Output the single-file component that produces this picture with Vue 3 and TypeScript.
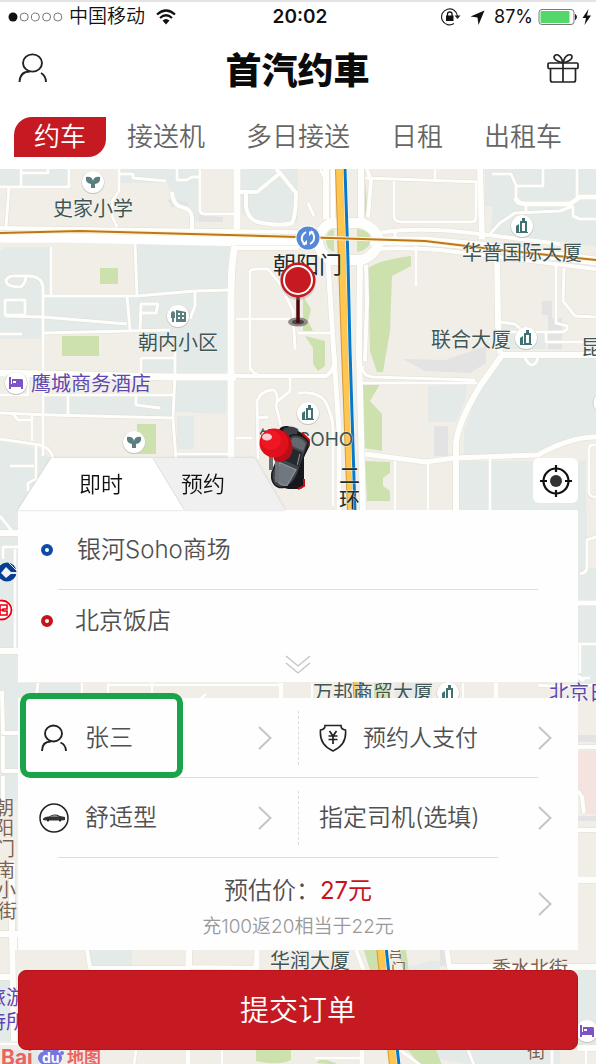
<script setup lang="ts">
import { ref } from 'vue'

interface Road { d: string; w: number }
interface Label { text: string; x: number; y: number; size: number; tone: string }
interface Poi { x: number; y: number; kind: 'school' | 'tower' | 'hotel' | 'estate' }

const services: string[] = ['约车', '接送机', '多日接送', '日租', '出租车']
const activeService = ref<string>('约车')
const timing = ref<'now' | 'later'>('now')

const tealAreas: string[] = [
  'M0 168H68V186H0Z', 'M118 168H200V220H192Q191 208 178 205L172 192L166 182H118Z', 'M240 168H298V222L262 224L240 212Z',
  'M0 250L5 246H50V295H43V338H0Z', 'M137 243L230 245V290L137 294Z', 'M43 297L230 290V346H140V330H43Z',
  'M45 395H172V417L45 413Z', 'M142 357H173V373H142Z', 'M175 346H229L226 413L176 411Z', 'M177 415H194V448H177Z',
  'M0 440L38 447L52 458V510H18V538H0Z', 'M178 454H230V460H178Z',
  'M485 168H596V246L545 238L490 232L493 206L485 205Z', 'M428 385L467 382L465 400L456 421H428Z',
  'M500 355H596V435L566 438L540 455H464V430L478 390Z', 'M458 460H586V510H458Z', 'M502 323L520 326L546 332V348H502Z',
  'M578 510H587V567H596V682H578Z', 'M0 535H18V800H0Z', 'M0 682H82V698H0Z', 'M395 682H432V698H395Z',
  'M86 949H132V968L90 966Z', 'M410 965L430 960H440V970H410Z', 'M530 1049H560V1064H530Z', 'M400 1049H530V1064H470Z',
  'M578 970H596V1045H578Z', 'M0 976H12V1040H0Z', 'M12 1049H38V1064H12Z'
]
const greenAreas: string[] = [
  'M100 267H118V283H100Z', 'M62 335H99V355H62Z', 'M137 423H156V453H137Z',
  'M334 228Q326 230 326 240Q327 249 334 251Z', 'M357 228Q371 229 371 240Q369 249 357 251Z',
  'M365 180L368 214H365Z', 'M368 268Q374 260 411 255V265L392 275L390 330L383 371H377L370 350Z',
  'M363 383H380L370 400L382 413V450L364 447Z', 'M365 460L390 461V472L383 477V485L390 490V500H367Z',
  'M303 295L311 308L308 320L313 330L303 332Z', 'M305 335L325 340L325 365L318 370L313 363V347Z',
  'M374 682H388V698H374Z', 'M364 949H378L382 970H370Z', 'M398 949H406L409 970H403Z',
  'M256 1049H291V1059Q280 1065 256 1060Z', 'M316 1062L322 1057L340 1064Z', 'M408 1049H436L442 1064H420Z'
]
const greyAreas: string[] = [
  'M167 198L188 201V206H172Z', 'M199 214L223 216V221H199Z', 'M403 358L445 359L486 345V362L470 372L425 370Z',
  'M434 425H448V455H434Z', 'M542 300H552V317H562V348H548V314H542Z', 'M578 734H596V741H578Z', 'M578 815H596V820H578Z',
  'M440 949H450V965H440Z'
]
const roads: Road[] = [
  { d: 'M0 186H69V168M21 168V186M21 172H48V168M9 186L6 226', w: 2 },
  { d: 'M119 168V173H133V177L166 180M119 173V190L112 200V215L117 226', w: 2 },
  { d: 'M172 191Q173 205 182 206Q191 208 192 216V229', w: 3 },
  { d: 'M177 168V179H187L192 176H200M200 168V210Q201 213 205 213H234', w: 2 },
  { d: 'M240 191H257L280 172L276 168M280 172L296 192M246 191V205Q247 218 258 221Q280 226 292 222Q296 215 296 190', w: 3 },
  { d: 'M51 246V295M135 243L137 294M43 295H137L195 290L230 289M6 281Q6 275 14 275H30Q42 276 43 286V455M6 281Q8 286 20 286Q25 284 26 276', w: 2 },
  { d: 'M5 299H25V314H5ZM5 315L43 316L127 323M0 333H22M43 332L170 329M127 295L130 329M140 330L141 303H158L156 312H142M195 290V305L190 318', w: 2 },
  { d: 'M250 370V270Q252 268 258 268H268L280 283L293 310L295 348M236 318H290M250 365Q252 373 258 373', w: 2 },
  { d: 'M0 227L298 231M236 247H298', w: 3 },
  { d: 'M0 372L170 376H236', w: 6 }, { d: 'M236 375H326Q335 370 335 355', w: 3 },
  { d: 'M141 374V357H175M175 346V372L173 418L176 458M43 394H173M0 412L50 414L172 417M68 394V414M136 394V404L160 407', w: 2 },
  { d: 'M0 438L40 444Q52 448 53 458M32 413V440M13 413L18 419H32M10 465H34M36 445V478L28 482V490M176 453H232M28 376V394H0', w: 2 },
  { d: 'M258 458L257 400Q262 388 274 389Q279 394 276 405L281 425M236 437H252M257 417L268 416M290 376V390L278 400M298 392Q318 390 325 400Q333 415 333 430V505', w: 2 },
  { d: 'M237 168V228M235 245Q231 260 231 300V510', w: 6 },
  { d: 'M365 177L480 181M435 168V180M394 180V216Q395 221 402 221H473Q476 220 476 215V182', w: 2 },
  { d: 'M480 168L482 238M497 252L498 322L500 352', w: 5 },
  { d: 'M492 173H511L516 184V200M515 185H543V168M577 168V196M573 205V215L580 218H596M488 235L500 222L515 212L560 210L573 205M526 203V212', w: 2 },
  { d: 'M516 197Q516 202 525 203H570L580 196H596', w: 4 },
  { d: 'M378 232Q420 225 480 233L560 243M378 248Q400 246 440 249L596 268', w: 3 },
  { d: 'M370 240L425 240L480 245L596 260', w: 8 },
  { d: 'M416 245V285M556 265V322L567 325Q568 330 562 331H505M564 267L563 300L575 315L596 316M500 321L515 323L525 332M546 331V341H596', w: 2 },
  { d: 'M596 354H502L480 385Q456 425 456 445V510', w: 5 },
  { d: 'M365 453L425 461L455 457L538 454Q570 436 596 436', w: 4 },
  { d: 'M362 365Q363 375 372 376L475 379M362 382H477M395 460V510M428 460V510M490 458V510M525 356Q527 363 532 364Q537 363 538 356M596 444H592Q589 445 589 448V492Q590 496 596 496', w: 2 },
  { d: 'M298 332H330M320 168L324 176M308 202L314 215M395 231V240', w: 2 },
  { d: 'M326 168V218', w: 5 }, { d: 'M333 168V222M328 262L333 340L339 430V510', w: 4 },
  { d: 'M361 168V218M360 264L359 350L363 510', w: 5 },
  { d: 'M367 168L371 180L368 216M366 264L367 300L365 360', w: 3 },
  { d: 'M330 222H362Q377 228 379 240Q377 253 362 259H330Q319 252 318 240Q320 228 330 222Z', w: 9 },
  { d: 'M0 532H18M0 650H18', w: 5 }, { d: 'M3 558V546H18M15 548V648M0 515L12 530', w: 2 },
  { d: 'M578 602H596', w: 4 }, { d: 'M596 536L587 539V565Q587 572 580 573M578 643H596M580 643V672M578 677H590', w: 2 },
  { d: 'M38 682L36 698M82 682V698M108 684H280M108 682V698M152 682V698M200 698L206 693M312 682V698M463 682V698M538 684Q550 686 596 684', w: 2 },
  { d: 'M281 682V698M496 682V698', w: 4 }, { d: 'M2 690L3 732H18M3 735V770H18M3 775V800', w: 3 },
  { d: 'M578 746H596M578 829H596M578 790L582 796L584 812M578 880H596M578 675L584 680', w: 3 },
  { d: 'M0 933H12M12 933L14 1040M12 860V930M0 976H12M14 949V933H18', w: 5 },
  { d: 'M87 949L90 967H190M190 949V966L255 967L257 949M356 949L364 970', w: 3 },
  { d: 'M188 949V970M188 1049V1064M257 949V970M447 949L450 970M362 1049V1064', w: 4 },
  { d: 'M450 966H596M578 1047H596', w: 5 },
  { d: 'M0 1043H18M134 1064L136 1049M222 1049V1064M468 1049L474 1064M552 1049V1064M586 1049V1064M315 1057H360M420 1064L400 1049', w: 2 },
  { d: 'M578 878H596', w: 4 }
]
const labels: Label[] = [
  { text: '史家小学', x: 53, y: 215, size: 20, tone: 'slate' },
  { text: '朝阳门', x: 273, y: 272, size: 23, tone: 'dark' },
  { text: '华普国际大厦', x: 462, y: 259, size: 20, tone: 'slate' },
  { text: '联合大厦', x: 431, y: 346, size: 20, tone: 'slate' },
  { text: '昆', x: 581, y: 354, size: 20, tone: 'slate' },
  { text: '朝内小区', x: 138, y: 349, size: 20, tone: 'slate' },
  { text: '鹰城商务酒店', x: 31, y: 390, size: 20, tone: 'purple' },
  { text: '银河', x: 259, y: 445, size: 20, tone: 'slate' },
  { text: '二', x: 339, y: 482, size: 21, tone: 'dark' },
  { text: '环', x: 339, y: 506, size: 21, tone: 'dark' },
  { text: '万邦商贸大厦', x: 313, y: 699, size: 20, tone: 'slate' },
  { text: '北京日报', x: 549, y: 699, size: 20, tone: 'purple' },
  { text: '朝', x: -5, y: 814, size: 19, tone: 'brown' },
  { text: '阳', x: -5, y: 834, size: 19, tone: 'brown' },
  { text: '门', x: -4, y: 855, size: 19, tone: 'brown' },
  { text: '南', x: -4, y: 876, size: 19, tone: 'brown' },
  { text: '小', x: -3, y: 896, size: 19, tone: 'brown' },
  { text: '街', x: -2, y: 917, size: 19, tone: 'brown' },
  { text: '华润大厦', x: 270, y: 967, size: 20, tone: 'slate' },
  { text: '秀水北街', x: 492, y: 974, size: 19, tone: 'brown' },
  { text: '旅游', x: -14, y: 1004, size: 20, tone: 'purple' },
  { text: '待所', x: -14, y: 1028, size: 20, tone: 'purple' },
  { text: '街', x: 527, y: 1057, size: 19, tone: 'brown' },
  { text: '宫', x: 388, y: 956, size: 15, tone: 'brown' },
  { text: '门', x: 391, y: 973, size: 15, tone: 'brown' }
]
const pois: Poi[] = [
  { x: 93, y: 181, kind: 'school' }, { x: 134, y: 441, kind: 'school' },
  { x: 522, y: 225, kind: 'tower' }, { x: 526, y: 337, kind: 'tower' },
  { x: 308, y: 412, kind: 'tower' }, { x: 448, y: 692, kind: 'tower' },
  { x: 16, y: 382, kind: 'hotel' }, { x: 587, y: 1030, kind: 'hotel' },
  { x: 178, y: 315, kind: 'estate' }
]
</script>

<template>
  <div class="page">
    <header class="top">
      <div class="status">
        <div class="status-left">
          <svg width="56" height="12" viewBox="0 0 56 12" aria-hidden="true">
            <circle cx="5" cy="6" r="4.5" fill="#111" />
            <circle v-for="n in 4" :key="n" :cx="5 + n * 11.2" cy="6" r="4" fill="none" stroke="#777" stroke-width="1" />
          </svg>
          <span>中国移动</span>
          <svg class="wifi" width="20" height="16" viewBox="0 0 20 16" aria-hidden="true">
            <g fill="none" stroke="#111" stroke-width="2.2"><path d="M1 5.5Q10-2.5 19 5.5" /><path d="M4 9Q10 3.5 16 9" /></g>
            <path d="M6.5 11.5Q10 8.5 13.5 11.5L10 15.5Z" fill="#111" />
          </svg>
        </div>
        <time class="clock">20:02</time>
        <div class="status-right">
          <svg width="20" height="18" viewBox="0 0 20 18" aria-hidden="true">
            <path d="M16.5 8A8 8 0 1 0 13 15.6" fill="none" stroke="#222" stroke-width="1.2" />
            <path d="M13.5 7.5H19.5L16.5 11Z" fill="#222" /><rect x="5" y="7.5" width="7.5" height="5.5" fill="#111" />
            <path d="M6.5 8V6Q6.5 4 8.8 4Q11 4 11 6V8" fill="none" stroke="#111" stroke-width="1.3" />
          </svg>
          <svg class="nav-arrow" width="15" height="15" viewBox="0 0 15 15" aria-hidden="true"><path d="M14.5 0.5L8.5 15L7.5 7.5L0.5 6.5Z" fill="#111" /></svg>
          <span class="percent">87%</span>
          <svg width="54" height="18" viewBox="0 0 54 18" aria-hidden="true">
            <rect x="1" y="1.5" width="35" height="15" rx="3" fill="#fff" stroke="#777" />
            <rect x="2.5" y="3" width="29" height="12" rx="1" fill="#53d769" /><path d="M37.5 6.5Q39.5 9 37.5 11.5Z" fill="#222" stroke="#222" />
            <path d="M50.5 1L44.5 10H48L46.5 17L53 7.5H49Z" fill="#111" />
          </svg>
        </div>
      </div>
      <div class="brand-bar">
        <button class="icon-button" type="button" aria-label="个人中心">
          <svg width="30" height="30" viewBox="0 0 30 30" fill="none" stroke="#222" stroke-width="1.9" aria-hidden="true">
            <ellipse cx="14.5" cy="10" rx="9.5" ry="8.6" /><path d="M1.5 29Q2 18.5 12 18.5M23 20Q28 23 28 29" />
          </svg>
        </button>
        <h1>首汽约車</h1>
        <button class="icon-button" type="button" aria-label="优惠">
          <svg width="32" height="30" viewBox="0 0 32 30" fill="none" stroke="#222" stroke-width="1.7" aria-hidden="true">
            <rect x="1" y="10" width="30" height="5.5" rx="1" /><path d="M3.5 15.5V27Q3.5 29 5.5 29H26.5Q28.5 29 28.5 27V15.5M16 10V29" />
            <path d="M16 10Q7 7.5 7 4Q8 1 11 2Q14.5 3.5 16 10Q17.5 3.5 21 2Q25 1 25 4Q25 7.5 16 10" />
          </svg>
        </button>
      </div>
      <nav class="services">
        <button v-for="name in services" :key="name" type="button" :class="['service', { active: name === activeService }]" @click="activeService = name">{{ name }}</button>
      </nav>
    </header>

    <main class="stage">
      <svg class="map" viewBox="0 168 596 896" preserveAspectRatio="xMidYMin slice" aria-label="地图">
        <rect y="168" width="596" height="896" fill="#f1eee8" />
        <path v-for="(d, i) in tealAreas" :key="'t' + i" :d="d" fill="#e4eae8" />
        <path v-for="(d, i) in greyAreas" :key="'y' + i" :d="d" fill="#e3e3e4" />
        <path v-for="(d, i) in greenAreas" :key="'g' + i" :d="d" fill="#cde1ae" />
        <path d="M578 750H596V813H584L582 796L578 790Z" fill="#f5e3df" />
        <path d="M0 237L60 237L298 242H320" fill="none" stroke="#fff" stroke-width="9" />
        <g fill="none" stroke="#e1ded4" stroke-linejoin="round">
          <path v-for="(r, i) in roads" :key="'c' + i" :d="r.d" :stroke-width="r.w + 2" />
        </g>
        <g fill="none" stroke="#fefefc" stroke-linejoin="round">
          <path v-for="(r, i) in roads" :key="'r' + i" :d="r.d" :stroke-width="r.w + 1" />
        </g>
        <g fill="none">
          <path d="M340 168L343 260L346 348L352 510L358 690L382 955L394 1064" stroke="#d39a37" stroke-width="10" />
          <path d="M340 168L343 260L346 348L352 510L358 690L382 955L394 1064" stroke="#ffc752" stroke-width="8" />
          <path d="M345 168L348 260L350 348L355 510L361 690L387 955L399 1064" stroke="#fff" stroke-width="4" />
          <path d="M345 168L348 260L350 348L355 510L361 690L387 955L399 1064" stroke="#0879c9" stroke-width="3" />
          <path d="M0 232L80 230L298 236L425 240L500 249L596 259" stroke="#fff3dc" stroke-width="4" />
          <path d="M0 232L80 230L298 236L425 240L500 249L596 259" stroke="#bd7715" stroke-width="2" />
        </g>
        <g class="map-labels">
          <text v-for="(l, i) in labels" :key="'l' + i" :x="l.x" :y="l.y" :font-size="l.size" :class="l.tone">{{ l.text }}</text>
          <text x="298" y="445" font-size="19" class="slate latin">SOHO</text>
        </g>
        <g v-for="(p, i) in pois" :key="'p' + i" :transform="`translate(${p.x} ${p.y})`">
          <circle r="11.5" cy="0.5" fill="#c9c7c2" /><circle r="11" fill="#fff" />
          <path v-if="p.kind === 'school'" d="M-7-5Q-1-6 0-1Q1-6 7-5Q8 1 2 2V6H-2V2Q-8 1-7-5Z" fill="#5a7f7e" />
          <g v-else-if="p.kind === 'tower'" fill="#3f7272"><path d="M-6 0L-3-2V7H-6ZM-2-5H0V-8H3V-5H5V7H-2ZM0-3V5H3V-3Z" fill-rule="evenodd" /><rect x="-6" y="6" width="12" height="1" /></g>
          <path v-else-if="p.kind === 'hotel'" d="M-7-6H-5V1H-4V-4H6Q7-4 7-2V6H5V4H-5V6H-7ZM-3-2V0H0V-2Z" fill="#7c55c5" />
          <g v-else fill="#5a7f7e"><path d="M-7-3Q-5-7-3-3V2H-4V6H-6V2H-7ZM-2-6L8-4V6H-2ZM0-3V-1H2V-3ZM4-3V-1H6V-3ZM0 1V3H2V1ZM4 1V3H6V1Z" fill-rule="evenodd" /></g>
        </g>
        <circle cx="604" cy="402" r="11" fill="#fff" stroke="#d5d2cb" />
        <g transform="translate(308 237)">
          <circle r="12.5" fill="#fff" /><circle r="11.5" fill="#5588d8" />
          <g fill="none" stroke="#fff" stroke-width="2"><path d="M-2-6Q-7-3-6 2Q-5 5-3 7M2 6Q7 3 6-2Q5-5 3-7" /></g>
          <path d="M-6 6.5H-1V2ZM6-6.5H1V-2Z" fill="#fff" />
        </g>
        <g transform="translate(7 571)">
          <circle r="9.5" fill="#073e93" /><path d="M-1-5L5 1L-1 6L-6 1Z" fill="#f5f5f5" /><path d="M2-9L10-1M5-9L10-4" stroke="#e8edf0" />
          <path d="M4 1H10" stroke="#e8edf0" stroke-width="2" />
        </g>
        <g transform="translate(2 609)"><circle r="11" fill="#fff" /><circle r="9.5" fill="none" stroke="#e60012" stroke-width="1.8" /><path d="M-6-5H5V-1H1V1H5V5H-6M-2-5V5M-6 0H1" fill="none" stroke="#e60012" stroke-width="1.6" /></g>

        <ellipse cx="298" cy="321" rx="10" ry="4.5" fill="#8c8988" /><ellipse cx="298" cy="321" rx="6" ry="2.5" fill="#4c4545" />
        <path d="M298 294V322" stroke="#4d0809" stroke-width="3.5" />
        <circle cx="298" cy="281" r="18" fill="#9e9791" opacity=".35" />
        <circle cx="298" cy="279" r="17.5" fill="#c61a22" /><circle cx="298" cy="279" r="14" fill="#c61a22" stroke="#fff" stroke-width="2" />

        <g transform="translate(292 456)">
          <path d="M-4-31Q-13-32-14-24L-12 25Q-10 32-3 32H8Q12 31 12 24V0L18-12L17-18L8-25Z" fill="#15171a" />
          <path d="M10-24L17-17V-11M12 22V29L6 32M-7-25L-2-19" fill="none" stroke="#c40b16" stroke-width="2" />
          <path d="M-9-28Q-1-33 6-28L5-22H-8Z" fill="#3d4045" />
          <g transform="rotate(24)">
            <path d="M-9-20Q0-26 9-20L12 14Q12 29 1 33Q-9 34-12 22L-13-12Z" fill="#41454b" stroke="#191b1f" stroke-width="1.5" />
            <path d="M-7-18Q0-22 7-18L8-10H-9Z" fill="#64696f" /><path d="M-9-8H8L10 6H-10Z" fill="#25282c" />
            <path d="M-7-6L-5 5M6-6L8 5M-9 10H9L7 28Q0 32-7 26Z" fill="#717780" stroke="#92979d" />
          </g>
        </g>
        <path d="M271 454V469M277 458V481" stroke="#6e7173" stroke-width="4" />
        <path d="M271 430Q285 425 291 439Q295 450 289 457Q280 464 274 459Z" fill="#b90d18" />
        <circle cx="274" cy="442" r="14.5" fill="#df101b" /><circle cx="271" cy="439" r="10" fill="#ee1722" /><ellipse cx="267" cy="436" rx="5" ry="3.5" fill="#fff" opacity=".8" />

        <g class="baidu">
          <text x="1" y="1064" font-size="21" class="baidu-red latin">Bai</text>
          <ellipse cx="50" cy="1057" rx="12" ry="8" class="baidu-blue" /><ellipse cx="47" cy="1049" rx="4" ry="2" class="baidu-blue" /><ellipse cx="56" cy="1049" rx="3" ry="2" class="baidu-blue" /><circle cx="62" cy="1052" r="2" class="baidu-blue" />
          <text x="42" y="1062" font-size="14" class="baidu-du latin">du</text>
          <text x="67" y="1063" font-size="17" class="baidu-red">地图</text>
        </g>
      </svg>

      <section class="booking">
        <div class="timing-bar">
          <div class="timing-tabs">
            <button type="button" :class="['timing', { on: timing === 'now' }]" @click="timing = 'now'">即时</button>
            <button type="button" :class="['timing', 'second', { on: timing === 'later' }]" @click="timing = 'later'">预约</button>
          </div>
          <button class="locate" type="button" aria-label="定位">
            <svg width="34" height="34" viewBox="0 0 34 34" aria-hidden="true"><circle cx="17" cy="17" r="12.5" fill="none" stroke="#111" stroke-width="2.2" /><circle cx="17" cy="17" r="6" fill="#333" /><path d="M17 1V8M17 26V33M1 17H8M26 17H33" stroke="#111" stroke-width="2.2" /></svg>
          </button>
        </div>

        <div class="card route">
          <button class="place from" type="button"><span class="dot blue"></span>银河Soho商场</button>
          <button class="place" type="button"><span class="dot red"></span>北京饭店</button>
          <button class="expand" type="button" aria-label="展开">
            <svg width="26" height="19" viewBox="0 0 26 19" fill="none" stroke="#c4c4c4" stroke-width="1.3" aria-hidden="true"><path d="M1 1L13 11L25 1M1 8L13 18L25 8" /></svg>
          </button>
        </div>

        <div class="card options">
          <div class="option-row">
            <button class="option marked" type="button">
              <svg class="glyph" width="30" height="28" viewBox="0 0 30 28" fill="none" stroke="#222" stroke-width="1.9" aria-hidden="true"><ellipse cx="14.5" cy="9.5" rx="8.5" ry="8" /><path d="M3 27Q3 17.5 12 17.5M21.5 18.5Q27 21 27 27" /></svg>
              <span>张三</span>
              <svg class="arrow" width="14" height="24" viewBox="0 0 14 24" aria-hidden="true"><path d="M1 1L12.5 12L1 23" /></svg>
            </button>
            <button class="option pay" type="button">
              <svg class="glyph" width="28" height="28" viewBox="0 0 28 28" fill="none" stroke="#222" stroke-width="1.6" aria-hidden="true"><path d="M6 1.5H22Q22 5.5 26.5 6Q28 21 14 27Q0 21 1.5 6Q6 5.5 6 1.5Z" /><path d="M10.5 7L14 12L17.5 7M9.5 12H18.5M9.5 15.5H18.5M14 12V20" stroke-width="1.7" /></svg>
              <span>预约人支付</span>
              <svg class="arrow" width="14" height="24" viewBox="0 0 14 24" aria-hidden="true"><path d="M1 1L12.5 12L1 23" /></svg>
            </button>
          </div>
          <div class="option-row last">
            <button class="option" type="button">
              <svg class="glyph" width="30" height="30" viewBox="0 0 30 30" aria-hidden="true"><circle cx="15" cy="15" r="14" fill="none" stroke="#222" stroke-width="1.5" /><path d="M4 16Q5 13.5 10 13.5Q15 10 21 13L26 14V17L23 17.5Q21 14.5 19 17.5H11Q9 14.5 7 17.5L4 17Z" fill="#333" /><path d="M11 13.5Q15 11.5 20 13.5Z" fill="#ccc" /><circle cx="9" cy="17" r="1.5" fill="#222" /><circle cx="21" cy="17" r="1.5" fill="#222" /></svg>
              <span>舒适型</span>
              <svg class="arrow" width="14" height="24" viewBox="0 0 14 24" aria-hidden="true"><path d="M1 1L12.5 12L1 23" /></svg>
            </button>
            <button class="option driver" type="button">
              <span>指定司机(选填)</span>
              <svg class="arrow" width="14" height="24" viewBox="0 0 14 24" aria-hidden="true"><path d="M1 1L12.5 12L1 23" /></svg>
            </button>
          </div>
          <button class="estimate" type="button">
            <span class="price">预估价：<b>27元</b></span>
            <span class="promo">充100返20相当于22元</span>
            <svg class="arrow price-arrow" width="14" height="24" viewBox="0 0 14 24" aria-hidden="true"><path d="M1 1L12.5 12L1 23" /></svg>
          </button>
        </div>

        <button class="submit" type="button">提交订单</button>
      </section>
    </main>
  </div>
</template>

<style>
body { margin: 0; background: #fff; }
</style>

<style scoped>
.page { display: flex; flex-direction: column; min-height: 100vh; font-family: Inter, "Noto Sans CJK SC", sans-serif; font-weight: 350; color: #505050; background: #fff; }
button { margin: 0; padding: 0; border: 0; background: none; font: inherit; color: inherit; cursor: pointer; }
svg { display: block; flex: none; }
.top { border-top: 2px solid #e4e4e4; }
.status { display: grid; grid-template-columns: 1fr auto 1fr; align-items: center; height: 30px; padding: 0 4px 0 8px; color: #111; font-size: 19px; line-height: 30px; }
.status-left, .status-right { display: flex; align-items: center; }
.status-left { gap: 5px; }
.wifi { margin-left: 6px; }
.clock { font-size: 19px; font-weight: 600; }
.status-right { justify-content: flex-end; }
.nav-arrow { margin: 0 9px; }
.percent { margin-right: 5px; font-size: 18px; font-weight: 400; }
.brand-bar { display: flex; align-items: center; justify-content: space-between; height: 72px; padding: 0 17px 0 18px; }
h1 { margin: 0; font-family: "Noto Sans CJK SC", sans-serif; font-size: 36px; line-height: 40px; font-weight: 900; color: #0b0b0b; }
.services { display: flex; justify-content: space-between; align-items: center; height: 65px; padding: 0 34px 0 14px; font-size: 26px; line-height: 40px; color: #666; }
.service.active { margin-right: -20px; padding: 0 20px; color: #fff; background: #c61a22; border-radius: 18px 0 18px 0; }
.stage { position: relative; flex: 1; display: flex; flex-direction: column; justify-content: flex-end; overflow: hidden; }
.map { position: absolute; inset: 0; width: 100%; height: 100%; }
.map-labels, .baidu { font-family: "Noto Sans CJK SC", sans-serif; font-weight: 400; }
.map-labels text { paint-order: stroke; stroke: #ffffff90; stroke-width: 1px; }
.latin { font-family: Inter, sans-serif; }
.slate { fill: #3f5654; }
.dark { fill: #222c2b; }
.purple { fill: #5d48b0; }
.brown { fill: #7c6250; }
.baidu-red { fill: #ea6464; font-weight: 700; }
.baidu-blue { fill: #7775e0; }
.baidu-du { fill: #fff; font-weight: 700; }
.booking { position: relative; padding: 289px 18px 15px; }
.timing-bar { display: flex; align-items: flex-start; justify-content: space-between; }
.timing-tabs { display: flex; filter: drop-shadow(0 0 1px #c8c8c8); }
.timing { width: 166px; height: 52px; font-size: 22px; line-height: 52px; color: #111; background: #f0f0f0; clip-path: polygon(20% 0, 81% 0, 100% 100%, 0 100%); }
.timing.second { width: 132px; margin-left: -31px; padding-right: 32px; clip-path: polygon(0 0, 77% 0, 100% 100%, 24% 100%); }
.timing.on { background: #fff; }
.locate { display: grid; place-items: center; width: 45px; height: 45px; background: #fff; border-radius: 6px; }
.card { background: #fefefe; }
.route { display: flex; flex-direction: column; }
.place { position: relative; display: flex; align-items: center; height: 61px; padding-left: 23px; font-size: 24px; line-height: 36px; text-align: left; gap: 22px; }
.place.from { height: 80px; gap: 24px; }
.place.from::after { content: ""; position: absolute; left: 40px; right: 40px; bottom: 0; height: 1px; background: #dedede; }
.dot { width: 4px; height: 4px; border: 4px solid #c5141c; border-radius: 50%; }
.dot.blue { border-color: #0b4ca5; }
.expand { align-self: center; padding: 4px 0 8px; }
.options { margin-top: 16px; }
.option-row { position: relative; display: grid; grid-template-columns: 1fr 1fr; }
.option-row::after { content: ""; position: absolute; left: 40px; right: 40px; bottom: 0; height: 1px; background: #dedede; }
.option-row.last::after { right: 80px; }
.option-row::before { content: ""; position: absolute; left: 50%; top: 13px; bottom: 13px; border-left: 1px dashed #dcdcdc; }
.option { position: relative; display: flex; align-items: center; height: 80px; padding: 0 26px 0 21px; font-size: 24px; line-height: 36px; }
.option .glyph { margin-right: 16px; }
.option.pay { font-size: 23px; }
.arrow { margin-left: auto; fill: none; stroke: #c6c6c6; stroke-width: 2; }
.marked::after { content: ""; position: absolute; z-index: 1; left: 2px; top: -5px; width: 151px; height: 73px; border: 6px solid #19a44a; border-radius: 10px; }
.estimate { position: relative; display: flex; flex-direction: column; align-items: center; justify-content: center; width: 100%; height: 92px; padding-top: 10px; }
.price { font-size: 24px; line-height: 36px; }
.price b { font-weight: 400; color: #c5141c; }
.promo { font-size: 19px; line-height: 36px; color: #999; }
.price-arrow { position: absolute; right: 26px; top: 34px; }
.submit { display: block; width: 100%; height: 80px; margin-top: 20px; padding-bottom: 4px; font-size: 29px; color: #fff; background: #c61a22; border: 1px solid #b91119; border-radius: 8px; }
</style>
